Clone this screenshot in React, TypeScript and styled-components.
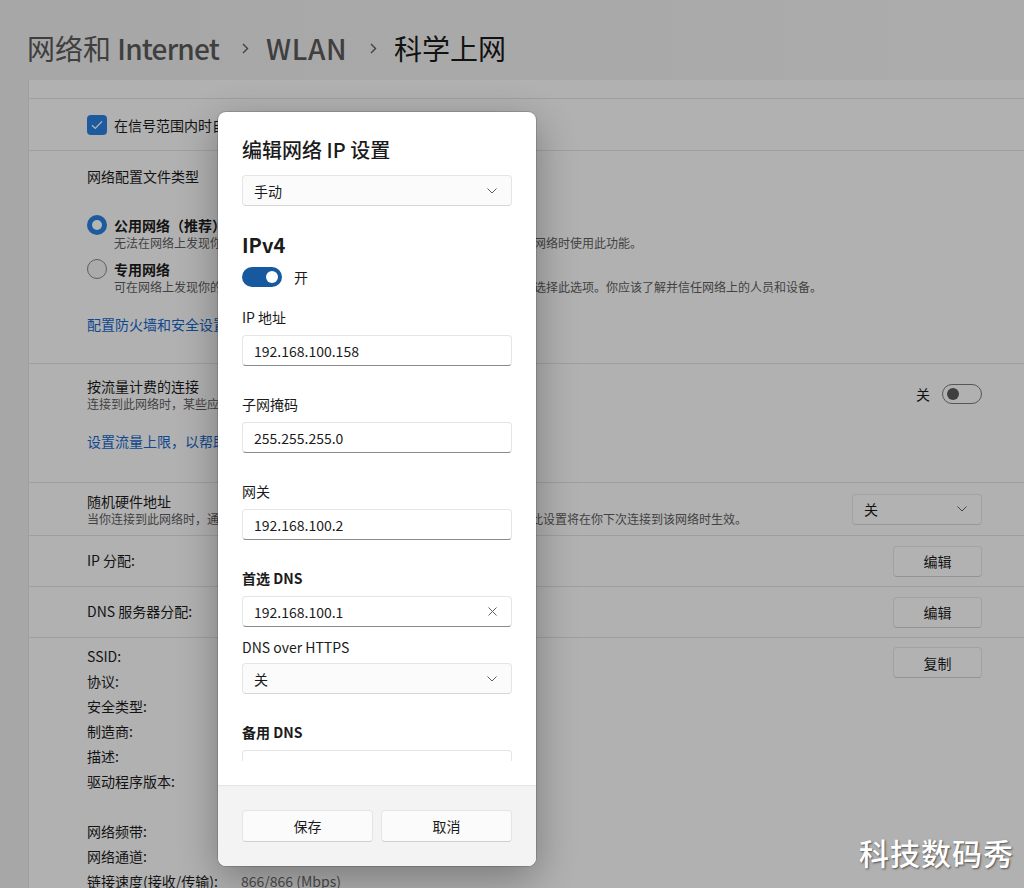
import React from "react";
import styled, { createGlobalStyle } from "styled-components";

const GlobalStyle = createGlobalStyle`
	html, body {
		margin: 0;
		padding: 0;
	}
	body {
		width: 1024px;
		height: 888px;
		overflow: hidden;
		font-family: "Noto Sans CJK SC", "Noto Sans", sans-serif;
		font-size: 14px;
		color: #1b1b1b;
		background: #eeedee;
	}
	* {
		box-sizing: border-box;
	}
`;

const Page = styled.div`
	position: relative;
	width: 1024px;
	height: 888px;
	overflow: hidden;
	display: flex;
	flex-direction: column;
	background: linear-gradient(90deg, #ecebec 0%, #f3f2f3 100%);
`;

const Header = styled.header`
	height: 80px;
	flex-shrink: 0;
	display: flex;
	align-items: center;
	padding: 16px 0 0 27px;
	font-size: 28px;
	line-height: 36px;
`;

const Crumb = styled.span<{ $current?: boolean }>`
	color: ${(p) => (p.$current ? "#1a1a1a" : "#5a5a5a")};
	white-space: nowrap;
`;

const Latin = styled.span<{ $spacing?: number }>`
	font-weight: 500;
	letter-spacing: ${(p) => p.$spacing ?? 0}px;
`;

const CrumbSep = styled.span`
	display: flex;
	margin: 0 17px 0 23px;
`;

const Content = styled.main`
	flex: 1;
	padding-left: 28px;
	overflow: hidden;
`;

const Card = styled.section`
	background: #faf9fa;
	border-left: 1px solid #e2e1e2;
	display: flex;
	flex-direction: column;
`;

const Row = styled.div<{ $height?: number; $gap?: number }>`
	border-top: 1px solid #e2e1e2;
	padding: 0 42px 0 58px;
	${(p) => (p.$height ? `height: ${p.$height}px;` : "")}
	display: flex;
	align-items: center;
	gap: ${(p) => p.$gap ?? 12}px;
	&:first-child {
		border-top: none;
	}
`;

const Stack = styled.div<{ $pad: string }>`
	display: flex;
	flex-direction: column;
	padding: ${(p) => p.$pad};
	border-top: 1px solid #e2e1e2;
`;

const Grow = styled.div`
	flex: 1;
	min-width: 0;
	display: flex;
	flex-direction: column;
`;

const Text = styled.div<{ $bold?: boolean }>`
	font-size: 14px;
	line-height: 20px;
	font-weight: ${(p) => (p.$bold ? 600 : 400)};
	white-space: nowrap;
`;

const Desc = styled.div`
	font-size: 12px;
	line-height: 16px;
	color: #5d5d5d;
	white-space: nowrap;
`;

const Link = styled.a<{ $top: number }>`
	display: block;
	margin-top: ${(p) => p.$top}px;
	color: #1466c8;
	font-size: 14px;
	line-height: 20px;
	white-space: nowrap;
	text-decoration: none;
`;

const Check = styled.span`
	width: 20px;
	height: 20px;
	border-radius: 4px;
	background: #297fdf;
	display: flex;
	align-items: center;
	justify-content: center;
	flex-shrink: 0;
`;

const RadioGroup = styled.div`
	display: flex;
	flex-direction: column;
	gap: 8px;
	margin-top: 29px;
`;

const RadioItem = styled.div`
	display: flex;
	gap: 7px;
	align-items: flex-start;
`;

const Radio = styled.span<{ $on?: boolean }>`
	width: 20px;
	height: 20px;
	border-radius: 50%;
	flex-shrink: 0;
	display: flex;
	align-items: center;
	justify-content: center;
	background: ${(p) => (p.$on ? "#297fdf" : "#f2f1f2")};
	border: ${(p) => (p.$on ? "none" : "1px solid #858585")};
	&::after {
		content: "";
		display: ${(p) => (p.$on ? "block" : "none")};
		width: 10px;
		height: 10px;
		border-radius: 50%;
		background: #fff;
	}
`;

const ToggleLabel = styled.span`
	font-size: 14px;
	line-height: 20px;
`;

const Toggle = styled.span<{ $on?: boolean }>`
	width: 40px;
	height: 20px;
	border-radius: 10px;
	flex-shrink: 0;
	display: flex;
	align-items: center;
	justify-content: ${(p) => (p.$on ? "flex-end" : "flex-start")};
	padding: 0 4px;
	background: ${(p) => (p.$on ? "#17599f" : "transparent")};
	border: ${(p) => (p.$on ? "none" : "1px solid #7a7a7a")};
	&::after {
		content: "";
		width: 12px;
		height: 12px;
		border-radius: 50%;
		background: ${(p) => (p.$on ? "#fff" : "#5a5a5a")};
	}
`;

const ComboBox = styled.div<{ $width?: number }>`
	width: ${(p) => (p.$width ? `${p.$width}px` : "100%")};
	height: 31px;
	flex-shrink: 0;
	border: 1px solid #e5e5e5;
	border-bottom-color: #d6d6d6;
	border-radius: 4px;
	background: #fbfbfb;
	display: flex;
	align-items: center;
	justify-content: space-between;
	padding: 0 14px 0 11px;
	font-size: 14px;
	line-height: 20px;
`;

const Button = styled.button<{ $width?: number; $height?: number }>`
	width: ${(p) => (p.$width ? `${p.$width}px` : "100%")};
	height: ${(p) => p.$height ?? 31}px;
	flex-shrink: 0;
	border: 1px solid #e5e5e5;
	border-bottom-color: #cfcfcf;
	border-radius: 4px;
	background: #fbfbfb;
	font-family: inherit;
	font-size: 14px;
	line-height: 20px;
	color: #1b1b1b;
	padding: 0;
`;

const PropsRow = styled.div`
	border-top: 1px solid #e2e1e2;
	padding: 5px 42px 0 58px;
	display: flex;
	align-items: flex-start;
`;

const PropGrid = styled.div`
	flex: 1;
	display: grid;
	grid-template-columns: 154px 1fr;
	grid-auto-rows: 25px;
	align-items: center;
	font-size: 14px;
	line-height: 20px;
	white-space: nowrap;
`;

const PropValue = styled.span`
	color: #6a6a6a;
`;

const Smoke = styled.div`
	position: absolute;
	inset: 0;
	background: rgba(0, 0, 0, 0.29);
	z-index: 1;
`;

const Dialog = styled.div`
	position: absolute;
	left: 218px;
	top: 112px;
	width: 318px;
	height: 754px;
	z-index: 2;
	background: #ffffff;
	border-radius: 8px;
	overflow: hidden;
	display: flex;
	flex-direction: column;
	box-shadow: 0 0 0 1px rgba(0, 0, 0, 0.14), 0 12px 40px rgba(0, 0, 0, 0.32);
`;

const DialogBody = styled.div`
	flex: 1;
	padding: 24px;
`;

const Scroll = styled.div`
	height: 625px;
	overflow: hidden;
	display: flex;
	flex-direction: column;
`;

const DialogTitle = styled.h2`
	margin: 0 0 11px;
	font-size: 20px;
	line-height: 28px;
	font-weight: 500;
	color: #1b1b1b;
`;

const SectionTitle = styled.h3`
	margin: 25px 0 8px;
	font-size: 20px;
	line-height: 28px;
	font-weight: 600;
`;

const ToggleRow = styled.div`
	display: flex;
	align-items: center;
	gap: 12px;
`;

const Field = styled.label<{ $top: number; $bottom?: number; $bold?: boolean }>`
	display: block;
	margin: ${(p) => p.$top}px 0 ${(p) => p.$bottom ?? 8}px;
	font-size: 14px;
	line-height: 20px;
	font-weight: ${(p) => (p.$bold ? 600 : 400)};
`;

const Input = styled.div`
	height: 31px;
	flex-shrink: 0;
	border: 1px solid #e5e5e5;
	border-bottom: 1px solid #8a8a8a;
	border-radius: 4px;
	background: #fff;
	display: flex;
	align-items: center;
	justify-content: space-between;
	padding: 0 14px 0 11px;
	font-size: 14px;
	line-height: 20px;
`;

const Footer = styled.footer`
	height: 81px;
	flex-shrink: 0;
	background: #f3f3f3;
	border-top: 1px solid #e5e5e5;
	padding: 24px;
	display: grid;
	grid-template-columns: 1fr 1fr;
	gap: 8px;
`;

const Watermark = styled.div`
	position: absolute;
	right: 10px;
	bottom: 18px;
	z-index: 3;
	color: #ffffff;
	font-size: 30px;
	line-height: 36px;
	font-weight: 500;
	letter-spacing: 1px;
	text-shadow: 1px 1px 2px rgba(0, 0, 0, 0.55);
`;

function Chevron({ color = "#5d5d5d" }: { color?: string }) {
	return (
		<svg width="10" height="6" viewBox="0 0 10 6">
			<path d="M0.5 0.5 L5 5 L9.5 0.5" fill="none" stroke={color} strokeWidth="1" />
		</svg>
	);
}

function CrumbArrow() {
	return (
		<CrumbSep>
			<svg width="7" height="11" viewBox="0 0 7 11">
				<path d="M1 1 L5.5 5.5 L1 10" fill="none" stroke="#5a5a5a" strokeWidth="1.4" />
			</svg>
		</CrumbSep>
	);
}

function ClearIcon() {
	return (
		<svg width="9" height="9" viewBox="0 0 9 9">
			<path d="M0.5 0.5 L8.5 8.5 M8.5 0.5 L0.5 8.5" fill="none" stroke="#5f5f5f" strokeWidth="1" />
		</svg>
	);
}

const properties: [string, string][] = [
	["SSID:", "科学上网"],
	["协议:", "Wi-Fi 5 (802.11ac)"],
	["安全类型:", "WPA2-个人"],
	["制造商:", "Intel Corporation"],
	["描述:", "Intel(R) Wi-Fi 6 AX201 160MHz"],
	["驱动程序版本:", "22.150.0.3"],
	["", ""],
	["网络频带:", "5 GHz"],
	["网络通道:", "149"],
	["链接速度(接收/传输):", "866/866 (Mbps)"],
];

export default function App() {
	return (
		<>
			<GlobalStyle />
			<Page>
				<Header>
					<Crumb>
						网络和 <Latin $spacing={-0.8}>Internet</Latin>
					</Crumb>
					<CrumbArrow />
					<Crumb>
						<Latin $spacing={0.6}>WLAN</Latin>
					</Crumb>
					<CrumbArrow />
					<Crumb $current>科学上网</Crumb>
				</Header>
				<Content>
					<Card>
						<Row $height={18} />
						<Row $height={52} $gap={7}>
							<Check>
								<svg width="12" height="10" viewBox="0 0 12 10">
									<path d="M1 5.2 L4.3 8.4 L11 1.4" fill="none" stroke="#fff" strokeWidth="1.3" />
								</svg>
							</Check>
							<Text>在信号范围内时自动连接</Text>
						</Row>
						<Stack $pad="15px 42px 29px 58px">
							<Text>网络配置文件类型</Text>
							<RadioGroup>
								<RadioItem>
									<Radio $on />
									<Grow>
										<Text $bold>公用网络（推荐）</Text>
										<Desc>
											无法在网络上发现你的设备。在大多数情况下，在家里、工作或公共场所连接到网络时使用此功能。
										</Desc>
									</Grow>
								</RadioItem>
								<RadioItem>
									<Radio />
									<Grow>
										<Text $bold>专用网络</Text>
										<Desc>
											可在网络上发现你的设备。如果需要文件共享或使用通过此网络通信的应用，请选择此选项。你应该了解并信任网络上的人员和设备。
										</Desc>
									</Grow>
								</RadioItem>
							</RadioGroup>
							<Link $top={19}>配置防火墙和安全设置</Link>
						</Stack>
						<Stack $pad="12px 42px 31px 58px">
							<Row style={{ border: "none", padding: 0 }}>
								<Grow>
									<Text>按流量计费的连接</Text>
									<Desc>连接到此网络时，某些应用的工作方式可能会有所不同，以减少数据使用量</Desc>
								</Grow>
								<ToggleLabel>关</ToggleLabel>
								<Toggle />
							</Row>
							<Link $top={19}>设置流量上限，以帮助控制此网络上的数据使用量</Link>
						</Stack>
						<Row $height={53}>
							<Grow>
								<Text>随机硬件地址</Text>
								<Desc>
									当你连接到此网络时，通过使用随机硬件地址，使其他人更难以跟踪你的设备位置。此设置将在你下次连接到该网络时生效。
								</Desc>
							</Grow>
							<ComboBox $width={130}>
								<span>关</span>
								<Chevron />
							</ComboBox>
						</Row>
						<Row $height={51}>
							<Grow>
								<Text style={{ marginTop: -3 }}>IP 分配:</Text>
							</Grow>
							<Button $width={89}>编辑</Button>
						</Row>
						<Row $height={51}>
							<Grow>
								<Text style={{ marginTop: -3 }}>DNS 服务器分配:</Text>
							</Grow>
							<Button $width={89}>编辑</Button>
						</Row>
						<PropsRow>
							<PropGrid>
								{properties.map(([k, v], i) => (
									<React.Fragment key={i}>
										<span>{k}</span>
										<PropValue>{v}</PropValue>
									</React.Fragment>
								))}
							</PropGrid>
							<Button $width={89} style={{ marginTop: 4 }}>
								复制
							</Button>
						</PropsRow>
					</Card>
				</Content>
				<Smoke />
				<Dialog>
					<DialogBody>
						<Scroll>
							<DialogTitle>编辑网络 IP 设置</DialogTitle>
							<ComboBox>
								<span>手动</span>
								<Chevron />
							</ComboBox>
							<SectionTitle>IPv4</SectionTitle>
							<ToggleRow>
								<Toggle $on />
								<ToggleLabel>开</ToggleLabel>
							</ToggleRow>
							<Field $top={20}>IP 地址</Field>
							<Input>192.168.100.158</Input>
							<Field $top={28}>子网掩码</Field>
							<Input>255.255.255.0</Input>
							<Field $top={28}>网关</Field>
							<Input>192.168.100.2</Input>
							<Field $top={28} $bold>
								首选 DNS
							</Field>
							<Input>
								<span>192.168.100.1</span>
								<ClearIcon />
							</Input>
							<Field $top={10} $bottom={6}>
								DNS over HTTPS
							</Field>
							<ComboBox>
								<span>关</span>
								<Chevron />
							</ComboBox>
							<Field $top={28} $bold>
								备用 DNS
							</Field>
							<Input />
						</Scroll>
					</DialogBody>
					<Footer>
						<Button $height={32}>保存</Button>
						<Button $height={32}>取消</Button>
					</Footer>
				</Dialog>
				<Watermark>科技数码秀</Watermark>
			</Page>
		</>
	);
}
